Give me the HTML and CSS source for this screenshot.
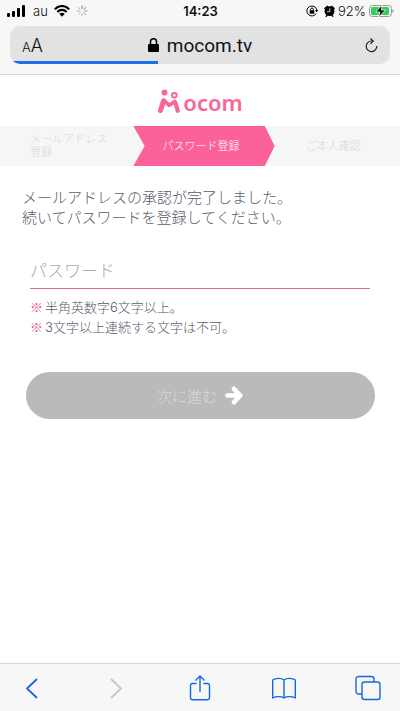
FILE: index.html
```html
<!DOCTYPE html>
<html lang="ja">
<head>
<meta charset="utf-8">
<meta name="viewport" content="width=device-width, initial-scale=1">
<title>パスワード登録 - Mocom</title>
<link rel="stylesheet" href="styles.css">
</head>
<body>
<div class="browser-top">
  <div class="status">
    <div class="status-side">
      <svg width="18" height="12" viewBox="0 0 18 12"><rect x="0" y="8" width="3" height="4" rx="1"/><rect x="5" y="6" width="3" height="6" rx="1"/><rect x="10" y="3" width="3" height="9" rx="1"/><rect x="15" y="0" width="3" height="12" rx="1"/></svg>
      <span class="carrier">au</span>
      <svg width="16" height="12" viewBox="0 0 16 12"><g fill="none" stroke="#000" stroke-width="2.1"><path d="M.8 4.3C5-.1 11-.1 15.200 4.300"/><path d="M3.300 7C6 4.200 10 4.200 12.700 7"/></g><path d="M5.300 8.700c1.600-1.400 3.800-1.400 5.400 0L8 11.700z"/></svg>
      <svg class="spinner" width="12" height="12" viewBox="0 0 12 12"><g stroke-linecap="round" stroke-width="1"><path stroke="#777" d="M6 1v2.500M9.600 2.500 8 4.200"/><path stroke="#999" d="M11 6H8.500M9.600 9.500 8 7.800"/><path stroke="#bbb" d="M6 11V8.500M2.500 9.500 4 7.800"/><path stroke="#aaa" d="M1 6h2.500M2.500 2.500 4 4.200"/></g></svg>
    </div>
    <span class="clock">14:23</span>
    <div class="status-side status-right">
      <svg width="12" height="12" viewBox="0 0 12 12"><path fill="none" stroke="#000" d="M10.200 8.500A5 5 0 1 1 10.800 5"/><path d="M9 5h3.400l-1.700 2.300zM3.700 5.300h4.600v3.400H3.700z"/><path fill="none" stroke="#000" d="M4.700 5.500V4.300a1.300 1.300 0 0 1 2.600 0v1.200"/></svg>
      <svg class="alarm" width="11" height="12" viewBox="0 0 11 12"><circle cx="5.500" cy="6.200" r="4.900"/><path d="M0 3.300 3.300.4l1 1L1 4.500zM11 3.300 7.700.4l-1 1L10 4.500zM1.200 11.500l1.700-2 1 .8-1.300 1.700zM9.800 11.500l-1.700-2-1 .8 1.300 1.700z"/><path fill="none" stroke="#fff" stroke-width=".8" d="M5.800 3.300v3.400H3"/></svg>
      <span class="percent">92%</span>
      <svg width="25" height="12" viewBox="0 0 25 12"><rect x=".5" y=".5" width="22" height="11" rx="3" fill="none" stroke="#999"/><rect x="2" y="2" width="18" height="8" rx="1.500" fill="#35ce5a"/><path fill="#999" d="M23.500 4c1.600.7 1.600 3.300 0 4z"/><path d="M13 0 6.800 7h4.100L9.800 12 16.500 5h-4.100z" stroke="#f7f7f7" stroke-width=".8"/></svg>
    </div>
  </div>
  <div class="address">
    <button class="text-size" aria-label="表示メニュー"><span class="small-a">A</span>A</button>
    <div class="host">
      <svg width="11" height="14" viewBox="0 0 11 14"><rect x="0" y="6" width="11" height="8" rx="1.300"/><path fill="none" stroke="#000" stroke-width="1.500" d="M2.500 6.500V3.800a3 3 0 0 1 6 0v2.700"/></svg>
      <span>mocom.tv</span>
    </div>
    <button class="reload" aria-label="再読み込み"><svg width="13" height="15" viewBox="0 0 13 15" fill="none" stroke="#222" stroke-width="1.200"><path d="M11.800 8A5.300 5.300 0 1 1 6.500 3H8"/><path d="M5.500.5 8.200 3 5.500 5.800"/></svg></button>
    <div class="progress"></div>
  </div>
</div>

<header class="brand">
  <a href="#" class="logo" aria-label="Mocom">
    <svg width="24" height="25" viewBox="0 0 24 25"><g fill="none" stroke="#f9659b" stroke-linecap="round" stroke-linejoin="round"><path stroke-width="5" d="M3.500 21.500 6.500 12"/><path stroke-width="3.800" d="M6.600 11.200 12.200 16.300 17.800 12.500"/><path stroke-width="4.200" d="M18.300 13.500l2.500 8.300"/><circle cx="17.300" cy="6.200" r="2.300" stroke-width="2"/></g><circle cx="7.500" cy="3.500" r="3" fill="#f9659b"/></svg>
    <span>ocom</span>
  </a>
</header>

<ol class="steps">
  <li class="step first"><span>メールアドレス<br>登録</span></li>
  <li class="step current" aria-current="step"><span>パスワード登録</span></li>
  <li class="step"><span>ご本人確認</span></li>
</ol>

<main class="content">
  <p class="lead">メールアドレスの承認が完了しました。<br>続いてパスワードを登録してください。</p>
  <form class="form">
    <input class="password" type="password" placeholder="パスワード" aria-label="パスワード">
    <ul class="notes">
      <li>半角英数字6文字以上。</li>
      <li>3文字以上連続する文字は不可。</li>
    </ul>
    <button class="next" type="submit" disabled>次に進む
      <svg width="18" height="19" viewBox="0 0 18 19" fill="none" stroke="#fff" stroke-width="4.600" stroke-linecap="round"><path d="M2.500 9.500h12M9 2.800l6.300 6.700L9 16.200" stroke-linejoin="round"/></svg>
    </button>
  </form>
</main>

<nav class="toolbar">
  <button aria-label="戻る"><svg width="26" height="26" viewBox="0 0 26 26"><path d="M18 4 8 13.500 18 23" stroke-width="1.800"/></svg></button>
  <button aria-label="進む" disabled><svg width="26" height="26" viewBox="0 0 26 26"><path d="M8 4l10 9.500L8 23" stroke-width="1.800"/></svg></button>
  <button aria-label="共有"><svg width="26" height="26" viewBox="0 0 26 26"><path d="M9.500 8.500H5.200A1.700 1.700 0 0 0 3.500 10.200v12.800a1.700 1.700 0 0 0 1.700 1.700h15.600a1.700 1.700 0 0 0 1.700-1.700V10.200a1.700 1.700 0 0 0-1.700-1.700h-4.300M13 17V1M8.500 5.500 13 1l4.500 4.500"/></svg></button>
  <button aria-label="ブックマーク"><svg width="26" height="26" viewBox="0 0 26 26"><path d="M13 5C10.500 2.800 4.500 2.800 1.700 5v18c3-1.800 8.800-1.800 11.300 0 2.500-1.800 8.300-1.800 11.300 0V5C21.500 2.800 15.500 2.800 13 5zv18"/></svg></button>
  <button aria-label="タブ"><svg width="26" height="26" viewBox="0 0 26 26"><rect x="7" y="7" width="18" height="17.500" rx="2.500"/><path d="M7 19H3.500A2.500 2.500 0 0 1 1 16.500V4a2.500 2.500 0 0 1 2.500-2.500h13A2.500 2.500 0 0 1 19 4v3"/></svg></button>
</nav>
</body>
</html>
```

FILE: styles.css
```css
* {
  box-sizing: border-box;
}

body {
  margin: 0;
  min-height: 100vh;
  display: flex;
  flex-direction: column;
  background: #fff;
  color: #5b5a6b;
  font-family: Inter, "Noto Sans CJK JP", sans-serif;
  font-weight: 300;
}

button {
  padding: 0;
  border: 0;
  background: none;
  font: inherit;
  color: inherit;
}

svg {
  display: block;
  flex: none;
}

/* Browser chrome */
.browser-top {
  padding: 0 10px 10px;
  border-bottom: 1px solid #d5d5d5;
  background: #f7f7f7;
  color: #111;
}

.status {
  display: grid;
  grid-template-columns: 1fr auto 1fr;
  align-items: center;
  height: 22px;
  margin: 0 -4px 4px -3px;
  font-size: 13px;
  font-weight: 300;
}

.status-side {
  display: flex;
  align-items: center;
  gap: 6px;
}

.status-right {
  justify-content: flex-end;
  gap: 3px;
}

.clock {
  font-weight: 600;
}

.carrier {
  margin-left: 2px;
}

.alarm {
  margin-left: 3px;
}

.address {
  position: relative;
  display: grid;
  grid-template-columns: 1fr auto 1fr;
  align-items: center;
  height: 38px;
  padding: 0 12px;
  border-radius: 10px;
  overflow: hidden;
  background: #e2e2e3;
}

.text-size {
  justify-self: start;
  font-size: 18px;
}

.small-a {
  font-size: 13px;
}

.host {
  display: flex;
  align-items: center;
  gap: 8px;
  font-family: Roboto, sans-serif;
  font-size: 19px;
  font-weight: 400;
}

.reload {
  justify-self: end;
}

.progress {
  position: absolute;
  left: 0;
  bottom: 0;
  width: 39%;
  height: 3px;
  background: #1b70ea;
}

/* Page */
.brand {
  display: flex;
  justify-content: center;
  padding: 12px 0;
}

.logo {
  display: flex;
  align-items: flex-end;
  gap: 2px;
  height: 27px;
  color: #f9659b;
  font-family: "Noto Sans", sans-serif;
  font-size: 22px;
  font-weight: 600;
  line-height: 24px;
  text-decoration: none;
}

.steps {
  display: grid;
  grid-template-columns: repeat(3, 1fr);
  margin: 0;
  padding: 0;
  list-style: none;
  background: #f6f6f6;
  color: #d8d8d8;
  font-size: 11px;
  line-height: 13px;
}

.step {
  display: flex;
  align-items: center;
  justify-content: center;
  height: 40px;
}

.first {
  padding-left: 4px;
}

.current {
  margin-right: -8px;
  padding-right: 6px;
  background: #fb629b;
  color: #fff;
  clip-path: polygon(0 0, 93% 0, 100% 50%, 93% 100%, 0 100%, 8% 50%);
}

.content {
  flex: 1;
  padding: 22px;
}

.lead {
  margin: 0;
  font-size: 15px;
  line-height: 20px;
}

.form {
  margin-top: 26px;
}

.password {
  display: block;
  width: calc(100% - 16px);
  height: 35px;
  margin: 0 8px;
  padding: 0;
  border: 0;
  border-bottom: 1px solid #dc6b96;
  border-radius: 0;
  background: none;
  color: inherit;
  font: inherit;
  font-size: 17px;
}

.password::placeholder {
  color: #aaa;
}

.notes {
  margin: 8px 8px 0;
  padding: 0;
  list-style: none;
  font-size: 13px;
  line-height: 20px;
}

.notes li {
  display: flex;
  gap: 2px;
}

.notes li::before {
  content: "※";
  color: #e95b91;
  font-family: "Noto Sans CJK JP", sans-serif;
}

.next {
  display: flex;
  align-items: center;
  justify-content: center;
  gap: 8px;
  width: calc(100% - 7px);
  height: 47px;
  margin: 35px auto 0;
  border-radius: 24px;
  background: #bababa;
  color: #d8d8d8;
  font-size: 15px;
}

.toolbar {
  display: flex;
  justify-content: space-between;
  height: 48px;
  padding: 10px 19px;
  border-top: 1px solid #d5d5d5;
  background: #f7f7f7;
}

.toolbar svg {
  fill: none;
  stroke: #1769db;
  stroke-width: 1.4px;
  stroke-linejoin: round;
}

.toolbar button:disabled svg {
  stroke: #c7c7c9;
}
```
